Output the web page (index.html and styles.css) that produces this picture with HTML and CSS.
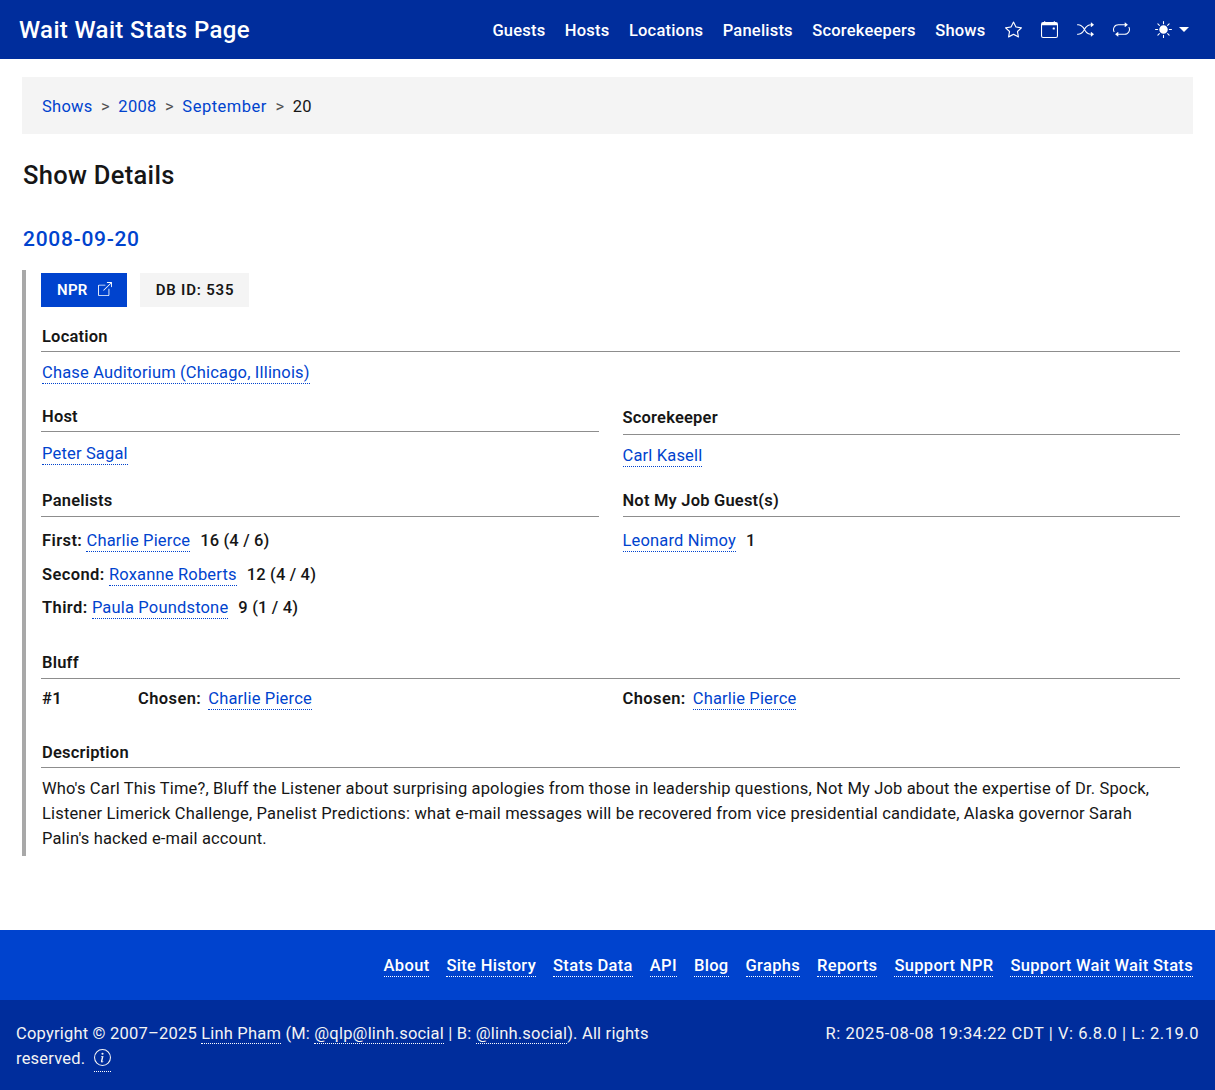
FILE: index.html
```html
<!DOCTYPE html>
<html lang="en">
<head>
  <meta charset="UTF-8">
  <title>Wait Wait Stats Page</title>
  <link rel="stylesheet" href="styles.css">
</head>
<body>

  <nav class="navbar">
    <a class="brand" href="#">Wait Wait Stats Page</a>
    <div class="nav-links">
      <a href="#">Guests</a>
      <a href="#">Hosts</a>
      <a href="#">Locations</a>
      <a href="#">Panelists</a>
      <a href="#">Scorekeepers</a>
      <a href="#">Shows</a>
      <a class="nav-icon" href="#" aria-label="Favorites">
        <svg width="17" height="17" viewBox="0 0 16 16" fill="currentColor"><path d="M2.866 14.85c-.078.444.36.791.746.593l4.39-2.256 4.389 2.256c.386.198.824-.149.746-.592l-.83-4.73 3.522-3.356c.33-.314.16-.888-.282-.95l-4.898-.696L8.465.792a.513.513 0 0 0-.927 0L5.354 5.12l-4.898.696c-.441.062-.612.636-.283.95l3.523 3.356-.83 4.73zm4.905-2.767-3.686 1.894.694-3.957a.56.56 0 0 0-.163-.505L1.71 6.745l4.052-.576a.53.53 0 0 0 .393-.288L8 2.223l1.847 3.658a.53.53 0 0 0 .393.288l4.052.575-2.906 2.77a.56.56 0 0 0-.163.506l.694 3.957-3.686-1.894a.5.5 0 0 0-.461 0z"/></svg>
      </a>
      <a class="nav-icon" href="#" aria-label="Calendar">
        <svg width="17" height="17" viewBox="0 0 16 16" fill="currentColor"><path d="M11 6.5a.5.5 0 0 1 .5-.5h1a.5.5 0 0 1 .5.5v1a.5.5 0 0 1-.5.5h-1a.5.5 0 0 1-.5-.5v-1z"/><path d="M3.5 0a.5.5 0 0 1 .5.5V1h8V.5a.5.5 0 0 1 1 0V1h1a2 2 0 0 1 2 2v11a2 2 0 0 1-2 2H2a2 2 0 0 1-2-2V3a2 2 0 0 1 2-2h1V.5a.5.5 0 0 1 .5-.5zM1 4v10a1 1 0 0 0 1 1h12a1 1 0 0 0 1-1V4H1z"/></svg>
      </a>
      <a class="nav-icon" href="#" aria-label="Random">
        <svg width="17" height="17" viewBox="0 0 16 16" fill="currentColor"><path fill-rule="evenodd" d="M0 3.5A.5.5 0 0 1 .5 3H1c2.202 0 3.827 1.24 4.874 2.418.49.552.865 1.102 1.126 1.532.26-.43.636-.98 1.126-1.532C9.173 4.24 10.798 3 13 3v1c-1.798 0-3.173 1.01-4.126 2.082A9.6 9.6 0 0 0 7.556 8a9.6 9.6 0 0 0 1.317 1.918C9.828 10.99 11.204 12 13 12v1c-2.202 0-3.827-1.24-4.874-2.418A10.6 10.6 0 0 1 7 9.05c-.26.43-.636.98-1.126 1.532C4.827 11.76 3.202 13 1 13H.5a.5.5 0 0 1 0-1H1c1.798 0 3.173-1.01 4.126-2.082A9.6 9.6 0 0 0 6.444 8a9.6 9.6 0 0 0-1.317-1.918C4.172 5.01 2.796 4 1 4H.5a.5.5 0 0 1-.5-.5z"/><path d="M13 5.466V1.534a.25.25 0 0 1 .41-.192l2.36 1.966c.12.1.12.284 0 .384l-2.36 1.966a.25.25 0 0 1-.41-.192zm0 9v-3.932a.25.25 0 0 1 .41-.192l2.36 1.966c.12.1.12.284 0 .384l-2.36 1.966a.25.25 0 0 1-.41-.192z"/></svg>
      </a>
      <a class="nav-icon" href="#" aria-label="Repeat">
        <svg width="17" height="17" viewBox="0 0 16 16" fill="currentColor"><path d="M11 5.466V4H5a4 4 0 0 0-3.584 5.777.5.5 0 1 1-.896.446A5 5 0 0 1 5 3h6V1.534a.25.25 0 0 1 .41-.192l2.36 1.966c.12.1.12.284 0 .384l-2.36 1.966a.25.25 0 0 1-.41-.192zm3.81.086a.5.5 0 0 1 .67.225A5 5 0 0 1 11 13H5v1.466a.25.25 0 0 1-.41.192l-2.36-1.966a.25.25 0 0 1 0-.384l2.36-1.966a.25.25 0 0 1 .41.192V12h6a4 4 0 0 0 3.585-5.777.5.5 0 0 1 .225-.67z"/></svg>
      </a>
      <a class="nav-icon theme" href="#" aria-label="Theme">
        <svg width="17" height="17" viewBox="0 0 16 16" fill="currentColor"><path d="M8 12a4 4 0 1 0 0-8 4 4 0 0 0 0 8zM8 0a.5.5 0 0 1 .5.5v2a.5.5 0 0 1-1 0v-2A.5.5 0 0 1 8 0zm0 13a.5.5 0 0 1 .5.5v2a.5.5 0 0 1-1 0v-2A.5.5 0 0 1 8 13zm8-5a.5.5 0 0 1-.5.5h-2a.5.5 0 0 1 0-1h2a.5.5 0 0 1 .5.5zM3 8a.5.5 0 0 1-.5.5h-2a.5.5 0 0 1 0-1h2A.5.5 0 0 1 3 8zm10.657-5.657a.5.5 0 0 1 0 .707l-1.414 1.415a.5.5 0 1 1-.707-.708l1.414-1.414a.5.5 0 0 1 .707 0zm-9.193 9.193a.5.5 0 0 1 0 .707L3.05 13.657a.5.5 0 0 1-.707-.707l1.414-1.414a.5.5 0 0 1 .707 0zm9.193 2.121a.5.5 0 0 1-.707 0l-1.414-1.414a.5.5 0 0 1 .707-.707l1.414 1.414a.5.5 0 0 1 0 .707zM4.464 4.465a.5.5 0 0 1-.707 0L2.343 3.05a.5.5 0 1 1 .707-.707l1.414 1.414a.5.5 0 0 1 0 .708z"/></svg>
        <span class="caret"></span>
      </a>
    </div>
  </nav>

  <main class="content">
    <div class="breadcrumb">
      <a href="#">Shows</a><span class="sep">&gt;</span>
      <a href="#">2008</a><span class="sep">&gt;</span>
      <a class="month" href="#">September</a><span class="sep">&gt;</span>
      <span>20</span>
    </div>

    <h1>Show Details</h1>
    <h2><a href="#">2008-09-20</a></h2>

    <section class="show">
      <div class="badges">
        <a class="badge npr" href="#">NPR
          <svg width="16" height="16" viewBox="0 0 16 16" fill="currentColor"><path fill-rule="evenodd" d="M8.636 3.5a.5.5 0 0 0-.5-.5H1.5A1.5 1.5 0 0 0 0 4.5v10A1.5 1.5 0 0 0 1.5 16h10a1.5 1.5 0 0 0 1.5-1.5V7.864a.5.5 0 0 0-1 0V14.5a.5.5 0 0 1-.5.5h-10a.5.5 0 0 1-.5-.5v-10a.5.5 0 0 1 .5-.5h6.636a.5.5 0 0 0 .5-.5z"/><path fill-rule="evenodd" d="M16 .5a.5.5 0 0 0-.5-.5h-5a.5.5 0 0 0 0 1h3.793L6.146 9.146a.5.5 0 1 0 .708.708L15 1.707V5.5a.5.5 0 0 0 1 0v-5z"/></svg>
        </a>
        <span class="badge dbid">DB ID: 535</span>
      </div>

      <div class="block">
        <h3>Location</h3>
        <p><a class="dotted" href="#">Chase Auditorium (Chicago, Illinois)</a></p>
      </div>

      <div class="columns people">
        <div class="block host">
          <h3>Host</h3>
          <p><a class="dotted" href="#">Peter Sagal</a></p>
        </div>
        <div class="block keeper">
          <h3>Scorekeeper</h3>
          <p><a class="dotted" href="#">Carl Kasell</a></p>
        </div>
      </div>

      <div class="columns panel">
        <div class="block">
          <h3>Panelists</h3>
          <p class="rank"><b>First:</b> <a class="dotted" href="#">Charlie Pierce</a><span class="score">16 (4 / 6)</span></p>
          <p class="rank"><b>Second:</b> <a class="dotted" href="#">Roxanne Roberts</a><span class="score">12 (4 / 4)</span></p>
          <p class="rank"><b>Third:</b> <a class="dotted" href="#">Paula Poundstone</a><span class="score">9 (1 / 4)</span></p>
        </div>
        <div class="block">
          <h3>Not My Job Guest(s)</h3>
          <p class="rank"><a class="dotted" href="#">Leonard Nimoy</a><span class="score">1</span></p>
        </div>
      </div>

      <div class="block bluff">
        <h3>Bluff</h3>
        <div class="columns">
          <p class="bluff-left"><b class="num">#1</b><b class="chosen">Chosen:</b><a class="dotted" href="#">Charlie Pierce</a></p>
          <p class="bluff-right"><b class="chosen">Chosen:</b><a class="dotted" href="#">Charlie Pierce</a></p>
        </div>
      </div>

      <div class="block desc">
        <h3>Description</h3>
        <p>Who's Carl This Time?, Bluff the Listener about surprising apologies from those in leadership questions, Not My Job about the expertise of Dr. Spock, Listener Limerick Challenge, Panelist Predictions: what e-mail messages will be recovered from vice presidential candidate, Alaska governor Sarah Palin's hacked e-mail account.</p>
      </div>
    </section>
  </main>

  <footer>
    <div class="foot-links">
      <a href="#">About</a>
      <a href="#">Site History</a>
      <a href="#">Stats Data</a>
      <a href="#">API</a>
      <a href="#">Blog</a>
      <a href="#">Graphs</a>
      <a href="#">Reports</a>
      <a href="#">Support NPR</a>
      <a href="#">Support Wait Wait Stats</a>
    </div>
    <div class="foot-info">
      <p class="copyright">Copyright © 2007–2025 <a href="#">Linh Pham</a> (M: <a href="#">@qlp@linh.social</a> | B: <a href="#">@linh.social</a>). All rights reserved. <a class="info" href="#" aria-label="Info"><svg width="17" height="17" viewBox="0 0 16 16" fill="currentColor"><path d="M8 15A7 7 0 1 1 8 1a7 7 0 0 1 0 14zm0 1A8 8 0 1 0 8 0a8 8 0 0 0 0 16z"/><path d="m8.93 6.588-2.29.287-.082.38.45.083c.294.07.352.176.288.469l-.738 3.468c-.194.897.105 1.319.808 1.319.545 0 1.178-.252 1.465-.598l.088-.416c-.2.176-.492.246-.686.246-.275 0-.375-.193-.304-.533L8.93 6.588zM9 4.5a1 1 0 1 1-2 0 1 1 0 0 1 2 0z"/></svg></a></p>
      <p class="build">R: 2025-08-08 19:34:22 CDT | V: 6.8.0 | L: 2.19.0</p>
    </div>
  </footer>

</body>
</html>
```

FILE: styles.css
```css
* {
  box-sizing: border-box;
}
body {
  margin: 0;
  font-family: Roboto, "Open Sans", sans-serif;
  font-size: 16.5px;
  line-height: 25px;
  letter-spacing: 0.17px;
  color: #161616;
  background: white;
}
a {
  color: #0043ce;
  text-decoration: none;
}
p {
  margin: 0;
}
b {
  font-weight: 600;
  letter-spacing: 0.4px;
}

.navbar {
  height: 59px;
  background: #002d9c;
  display: flex;
  align-items: center;
  justify-content: space-between;
  padding: 2px 26px 0 19px;
}
.navbar a {
  color: white;
}
.brand {
  font-size: 24px;
  font-weight: 500;
  letter-spacing: 0.35px;
}
.nav-links {
  display: flex;
  align-items: center;
  gap: 19.5px;
  font-weight: 500;
  letter-spacing: 0.2px;
}
.nav-icon {
  display: flex;
  align-items: center;
  margin-top: -2px;
}
.nav-icon + .nav-icon {
  margin-left: -0.5px;
}
.nav-icon.theme {
  margin-left: 5.5px;
  gap: 7px;
}
.caret {
  border-top: 5px solid white;
  border-left: 5px solid transparent;
  border-right: 5px solid transparent;
}

.content {
  padding: 18px 22px 74px;
}
.breadcrumb {
  height: 57px;
  background: #f4f4f4;
  padding: 2px 20px 0;
  display: flex;
  align-items: center;
  letter-spacing: 0.25px;
}
.month {
  letter-spacing: 0.5px;
}
.sep {
  margin: 0 8.5px;
  color: #525252;
}
h1 {
  font-size: 25.5px;
  font-weight: 500;
  line-height: 32px;
  letter-spacing: 0.3px;
  margin: 25px 0 0 1px;
}
h2 {
  font-size: 21px;
  font-weight: 500;
  line-height: 28px;
  letter-spacing: 0.7px;
  margin: 34px 0 17px 1px;
}

.show {
  border-left: 4px solid #a8a8a8;
  padding: 3px 13px 5px 15px;
}
.badges {
  display: flex;
  gap: 13px;
  margin-bottom: 17px;
  font-size: 15px;
  font-weight: 600;
}
.badge {
  height: 34px;
  display: flex;
  align-items: center;
  padding: 0 15px 0 16px;
}
.npr {
  background: #0043ce;
  color: white;
  gap: 10px;
  letter-spacing: 0.3px;
}
.npr svg {
  width: 14px;
  height: 14px;
  margin-top: -3px;
}
.dbid {
  background: #f4f4f4;
  letter-spacing: 0.8px;
}
.block h3 {
  margin: 0 0 8px;
  font-size: 16.5px;
  font-weight: 600;
  line-height: 24px;
  letter-spacing: 0.2px;
  padding: 1px 0 2px 1px;
  border-bottom: 1px solid #8d8d8d;
}
.block p {
  padding-left: 1px;
}
.columns > .block:last-child h3,
.columns > .block:last-child p,
.block .bluff-right {
  padding-left: 0;
}
.dotted {
  border-bottom: 1px dotted #0043ce;
  padding-bottom: 1px;
}

.columns {
  display: grid;
  grid-template-columns: 1fr 1fr;
  column-gap: 24px;
}
.people {
  margin-top: 19px;
}
.keeper {
  padding-top: 1px;
}
.keeper h3 {
  padding-bottom: 4px;
}
.host p {
  margin-top: 9px;
}
.panel {
  margin-top: 21px;
}
.panel h3 {
  padding: 0 0 3px 1px;
}
.rank {
  margin: 0 0 8.5px;
}
h3 + .rank {
  margin-top: 11px;
}
.score {
  margin-left: 10px;
  font-weight: 500;
}
.bluff {
  margin-top: 22px;
}
.bluff h3 {
  padding: 0 0 3px 1px;
  margin-bottom: 7px;
}
.num {
  width: 96px;
  display: inline-block;
}
.chosen {
  margin-right: 7px;
}
.desc {
  margin-top: 29px;
}
.desc p {
  padding-right: 10px;
  letter-spacing: 0.16px;
}

footer a {
  color: inherit;
}
.foot-links {
  height: 70px;
  background: #0043ce;
  color: white;
  display: flex;
  justify-content: flex-end;
  align-items: center;
  gap: 17px;
  padding: 4px 22px 0;
  font-weight: 500;
  letter-spacing: 0.32px;
}
.foot-links a {
  border-bottom: 1px dotted white;
  line-height: 20px;
}
.foot-info {
  height: 90px;
  background: #002d9c;
  color: #f4f4f4;
  display: flex;
  justify-content: space-between;
  padding: 21px 16px 0;
}
.copyright {
  width: 660px;
  letter-spacing: 0.2px;
}
.copyright a {
  border-bottom: 1px dotted white;
}
.build {
  letter-spacing: 0.55px;
}
.info {
  margin-left: 4px;
  padding-bottom: 3px;
}
.info svg {
  vertical-align: -2px;
}
```
